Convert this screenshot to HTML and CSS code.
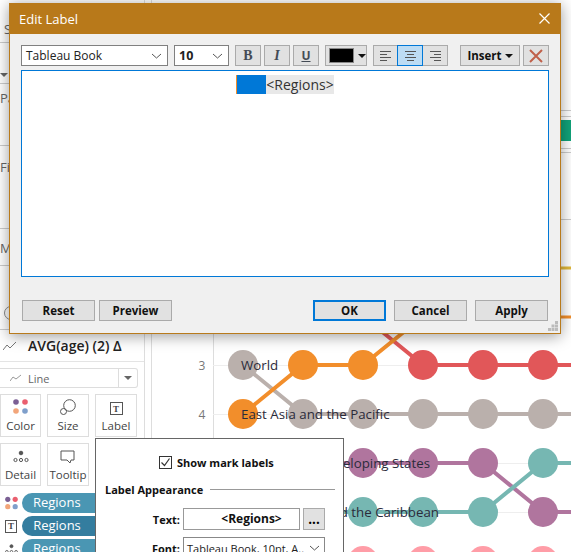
FILE: index.html
```html
<!DOCTYPE html>
<html lang="en">
<head>
    <meta charset="UTF-8">
    <meta name="viewport" content="width=device-width, initial-scale=1.0">
    <title>Edit Label</title>
    <link rel="stylesheet" href="styles.css">
</head>
<body>
    <div class="app">
        <!-- left panel, mostly behind the dialog -->
        <div class="side">
            <div class="side-sec sec-s"><span>S</span></div>
            <div class="side-sec sec-arrow"><span class="tri"></span></div>
            <div class="side-sec sec-pa"><span>Pa</span></div>
            <div class="side-sec sec-fi"><span>Fi</span></div>
            <div class="side-sec sec-m"><span>M</span></div>
            <div class="side-sec sec-circle"><span class="ring"></span></div>
            <div class="marks">
                <div class="marks-title">
                    <svg width="14" height="10" viewBox="0 0 14 10"><path d="M0 9 L4 4 L7 7 L13 1" fill="none" stroke="#777" stroke-width="1"/></svg>
                    <span>AVG(age) (2) Δ</span>
                </div>
                <div class="mark-type">
                    <svg width="12" height="8" viewBox="0 0 12 8"><path d="M0 7 L3 3 L6 5 L11 1" fill="none" stroke="#999" stroke-width="1"/></svg>
                    <span class="mark-type-name">Line</span>
                    <span class="mark-type-btn"><span class="tri"></span></span>
                </div>
                <div class="cards">
                    <div class="card">
                        <svg width="16" height="16" viewBox="0 0 16 16">
                            <circle cx="3" cy="3" r="2.8" fill="#7b5f94"/><circle cx="12" cy="3" r="2.8" fill="#ea5f6f"/>
                            <circle cx="3" cy="12" r="2.8" fill="#f2a57a"/><circle cx="12" cy="12" r="2.8" fill="#7f9fcb"/>
                        </svg>
                        <span>Color</span>
                    </div>
                    <div class="card">
                        <svg width="16" height="16" viewBox="0 0 16 16" fill="none" stroke="#555">
                            <circle cx="9.5" cy="6.5" r="5.8"/><circle cx="3.5" cy="12.5" r="3"/>
                        </svg>
                        <span>Size</span>
                    </div>
                    <div class="card">
                        <span class="t-box">T</span>
                        <span>Label</span>
                    </div>
                    <div class="card">
                        <svg width="16" height="14" viewBox="0 0 16 14" fill="none" stroke="#555">
                            <circle cx="8" cy="3" r="1.8" fill="#555"/>
                            <circle cx="2.5" cy="10" r="1.6"/><circle cx="8" cy="10" r="1.6"/><circle cx="13.5" cy="10" r="1.6"/>
                        </svg>
                        <span>Detail</span>
                    </div>
                    <div class="card">
                        <svg width="16" height="14" viewBox="0 0 16 14"><path d="M1 1 H14 V10 H11 L10 13 L7 10 H1 Z" fill="none" stroke="#555"/></svg>
                        <span>Tooltip</span>
                    </div>
                </div>
                <div class="pill-row">
                    <svg width="14" height="14" viewBox="0 0 14 14">
                        <circle cx="3" cy="3" r="2.8" fill="#7b5f94"/><circle cx="11" cy="3" r="2.8" fill="#ea5f6f"/>
                        <circle cx="3" cy="11" r="2.8" fill="#f2a57a"/><circle cx="11" cy="11" r="2.8" fill="#7f9fcb"/>
                    </svg>
                    <span class="pill">Regions</span>
                </div>
                <div class="pill-row">
                    <span class="t-box">T</span>
                    <span class="pill pill-dark">Regions</span>
                </div>
                <div class="pill-row">
                    <svg width="14" height="12" viewBox="0 0 14 12" fill="none" stroke="#555">
                        <circle cx="7" cy="3" r="1.6" fill="#555"/>
                        <circle cx="2" cy="9" r="1.4"/><circle cx="7" cy="9" r="1.4"/><circle cx="12" cy="9" r="1.4"/>
                    </svg>
                    <span class="pill">Regions</span>
                </div>
            </div>
        </div>

        <!-- bump chart -->
        <svg class="chart" width="426" height="552" viewBox="145 0 426 552">
            <line x1="151.5" y1="0" x2="151.5" y2="552" stroke="#ddd"/>
            <line x1="213.5" y1="300" x2="213.5" y2="552" stroke="#ddd"/>
            <g stroke="#ccc">
                <line x1="555" y1="110.500" x2="571" y2="110.500"/>
                <line x1="555" y1="116.500" x2="571" y2="116.500"/>
                <line x1="555" y1="148.500" x2="571" y2="148.500"/>
                <line x1="555" y1="152.500" x2="571" y2="152.500"/>
                <line x1="555" y1="219.500" x2="571" y2="219.500"/>
            </g>
            <g stroke="#eee">
                <line x1="213" y1="365.5" x2="571" y2="365.5"/>
                <line x1="213" y1="414.5" x2="571" y2="414.5"/>
                <line x1="213" y1="463.5" x2="571" y2="463.5"/>
                <line x1="213" y1="512.5" x2="571" y2="512.5"/>
            </g>
            <text class="axis" x="202" y="370" text-anchor="middle">3</text>
            <text class="axis" x="202" y="419" text-anchor="middle">4</text>

            <path d="M530 317 L571 317" stroke="#f28e2b" stroke-width="3"/>
            <path d="M530 268 L571 268" stroke="#e0b83a" stroke-width="3"/>
            <rect x="555" y="120" width="16" height="21" fill="#10a37a"/>

            <g fill="none" stroke-width="4">
                <path d="M243 561 L571 561" stroke="#ff9da7"/>
                <path d="M243 463 L423 463 L483 463 L543 512 L571 512" stroke="#b0759e"/>
                <path d="M243 512 L483 512 L543 463 L571 463" stroke="#76b7b2"/>
                <path d="M243 365 L303 414 L571 414" stroke="#bab0ac"/>
                <path d="M380 330 L423 365 L571 365" stroke="#e15759"/>
                <path d="M243 414 L303 365 L363 365 L405 331" stroke="#f28e2b"/>
            </g>
            <g fill="#ff9da7">
                <circle cx="243" cy="561" r="15"/><circle cx="303" cy="561" r="15"/><circle cx="363" cy="561" r="15"/>
                <circle cx="423" cy="561" r="15"/><circle cx="483" cy="561" r="15"/><circle cx="543" cy="561" r="15"/>
            </g>
            <g fill="#b0759e">
                <circle cx="303" cy="463" r="15"/><circle cx="363" cy="463" r="15"/><circle cx="423" cy="463" r="15"/>
                <circle cx="483" cy="463" r="15"/><circle cx="543" cy="512" r="15"/>
            </g>
            <g fill="#76b7b2">
                <circle cx="303" cy="512" r="15"/><circle cx="363" cy="512" r="15"/><circle cx="423" cy="512" r="15"/>
                <circle cx="483" cy="512" r="15"/><circle cx="543" cy="463" r="15"/>
            </g>
            <g fill="#bab0ac">
                <circle cx="243" cy="365" r="15"/><circle cx="303" cy="414" r="15"/><circle cx="363" cy="414" r="15"/>
                <circle cx="423" cy="414" r="15"/><circle cx="483" cy="414" r="15"/><circle cx="543" cy="414" r="15"/>
            </g>
            <g fill="#f28e2b">
                <circle cx="243" cy="414" r="15"/><circle cx="303" cy="365" r="15"/><circle cx="363" cy="365" r="15"/>
            </g>
            <g fill="#e15759">
                <circle cx="423" cy="365" r="15"/><circle cx="483" cy="365" r="15"/><circle cx="543" cy="365" r="15"/>
            </g>
            <text class="mark-label" x="241" y="370">World</text>
            <text class="mark-label" x="241" y="419">East Asia and the Pacific</text>
            <text class="mark-label" x="430" y="468" text-anchor="end">Small Island Developing States</text>
            <text class="mark-label" x="439" y="517" text-anchor="end">Latin America and the Caribbean</text>
        </svg>
    </div>

    <!-- label popover -->
    <div class="popover">
        <label class="show-labels">
            <span class="check">
                <svg width="13" height="13" viewBox="0 0 13 13"><path d="M2.5 6.5 L5.5 9.5 L10.5 2.5" fill="none" stroke="#333" stroke-width="1.2"/></svg>
            </span>
            Show mark labels
        </label>
        <div class="legend"><span>Label Appearance</span><i></i></div>
        <div class="form">
            <span class="form-label">Text:</span>
            <div class="text-field">&lt;Regions&gt;</div>
            <button class="more">...</button>
            <span class="form-label">Font:</span>
            <div class="font-field">
                <span>Tableau Book, 10pt, A..</span>
                <svg class="chev" width="11" height="6" viewBox="0 0 11 6"><path d="M1 1 L5.5 5 L10 1" fill="none" stroke="#555"/></svg>
            </div>
        </div>
    </div>

    <!-- edit label dialog -->
    <div class="dialog">
        <div class="titlebar">
            <span>Edit Label</span>
            <svg width="11" height="11" viewBox="0 0 11 11"><path d="M0.5 0.5 L10.5 10.5 M10.5 0.5 L0.5 10.5" stroke="#fff" stroke-width="1.2"/></svg>
        </div>
        <div class="dialog-body">
            <div class="toolbar">
                <div class="select select-font">
                    <span>Tableau Book</span>
                    <svg class="chev" width="11" height="6" viewBox="0 0 11 6"><path d="M1 1 L5.5 5 L10 1" fill="none" stroke="#555"/></svg>
                </div>
                <div class="select select-size">
                    <b>10</b>
                    <svg class="chev" width="11" height="6" viewBox="0 0 11 6"><path d="M1 1 L5.5 5 L10 1" fill="none" stroke="#555"/></svg>
                </div>
                <div class="tool-group">
                    <button class="tool tool-b">B</button>
                    <button class="tool tool-i">I</button>
                    <button class="tool tool-u">U</button>
                </div>
                <button class="color-btn"><span class="swatch"></span><span class="tri tri-black"></span></button>
                <div class="align-group">
                    <button class="align">
                        <svg width="11" height="10" viewBox="0 0 11 10"><path d="M0 .5H11M0 3.500H7M0 6.500H11M0 9.500H7" stroke="#555"/></svg>
                    </button>
                    <button class="align align-on">
                        <svg width="11" height="10" viewBox="0 0 11 10"><path d="M0 .5H11M2 3.500H9M0 6.500H11M2 9.500H9" stroke="#555"/></svg>
                    </button>
                    <button class="align">
                        <svg width="11" height="10" viewBox="0 0 11 10"><path d="M0 .5H11M4 3.500H11M0 6.500H11M4 9.500H11" stroke="#555"/></svg>
                    </button>
                </div>
                <button class="insert">Insert<span class="tri tri-black"></span></button>
                <button class="clear">
                    <svg width="14" height="14" viewBox="0 0 14 14"><path d="M1 1 L13 13 M13 1 L1 13" stroke="#c0604a" stroke-width="2"/></svg>
                </button>
            </div>
            <div class="editor">
                <span class="caret-sel"></span><span class="field">&lt;Regions&gt;</span>
            </div>
            <div class="actions">
                <div class="actions-left">
                    <button class="btn">Reset</button>
                    <button class="btn">Preview</button>
                </div>
                <div class="actions-right">
                    <button class="btn btn-default">OK</button>
                    <button class="btn">Cancel</button>
                    <button class="btn">Apply</button>
                </div>
            </div>
        </div>
        <svg class="grip" width="11" height="11" viewBox="0 0 11 11" fill="#bbb">
            <rect x="7" y="0" width="3" height="3"/><rect x="3.500" y="3.500" width="3" height="3"/><rect x="7" y="3.500" width="3" height="3"/>
            <rect x="0" y="7" width="3" height="3"/><rect x="3.500" y="7" width="3" height="3"/><rect x="7" y="7" width="3" height="3"/>
        </svg>
    </div>
</body>
</html>
```
FILE: styles.css
```css
html, body {
    margin: 0;
    padding: 0;
}

body {
    position: relative;
    width: 571px;
    height: 552px;
    overflow: hidden;
    background-color: #fff;
    font-family: "Open Sans", "Noto Sans", sans-serif;
    font-size: 12px;
    color: #333;
}

button {
    font-family: inherit;
    cursor: pointer;
}

.app {
    display: flex;
    height: 552px;
}

/* left panel */
.side {
    width: 145px;
    flex: none;
    height: 552px;
    overflow: hidden;
    box-sizing: border-box;
    border-right: 1px solid #ddd;
    background-color: #fff;
}

.side-sec {
    box-sizing: border-box;
    border-bottom: 1px solid #ccc;
    padding-left: 0;
    font-size: 13px;
    color: #666;
}

.sec-s { height: 43px; padding-top: 20px; padding-left: 4px; }
.sec-arrow { height: 41px; padding-top: 20px; }
.sec-pa { height: 62px; padding-top: 5px; }
.sec-fi { height: 83px; padding-top: 12px; }
.sec-m { height: 37px; padding-top: 10px; }
.sec-circle { height: 64px; padding-top: 40px; }

.ring {
    display: block;
    width: 12px;
    height: 12px;
    margin-left: 4px;
    border: 1px solid #888;
    border-radius: 50%;
}

.tri {
    display: inline-block;
    width: 0;
    height: 0;
    border-left: 4px solid transparent;
    border-right: 4px solid transparent;
    border-top: 4px solid #666;
}

.tri-black {
    border-top-color: #111;
}

.marks-title {
    display: flex;
    align-items: center;
    gap: 11px;
    box-sizing: border-box;
    height: 32px;
    padding-left: 3px;
    border-bottom: 1px solid #e4e4e4;
    font-size: 14px;
    font-weight: 600;
    color: #222;
}

.mark-type {
    display: flex;
    align-items: center;
    box-sizing: border-box;
    width: 138px;
    height: 20px;
    margin-top: 6px;
    padding-left: 10px;
    border: 1px solid #ddd;
    border-left: none;
    border-radius: 0 3px 3px 0;
    font-size: 11px;
    color: #666;
}

.mark-type-name {
    margin-left: 6px;
}

.mark-type-btn {
    display: flex;
    align-items: center;
    justify-content: center;
    width: 18px;
    height: 18px;
    margin-left: auto;
    border-left: 1px solid #ddd;
}

.cards {
    display: grid;
    grid-template-columns: 41px 42px 42px;
    column-gap: 6px;
    row-gap: 6px;
    width: 138px;
    margin-top: 6px;
    margin-bottom: 7px;
}

.card {
    display: flex;
    flex-direction: column;
    align-items: center;
    justify-content: flex-end;
    gap: 3px;
    box-sizing: border-box;
    height: 43px;
    padding-bottom: 3px;
    border: 1px solid #ddd;
    font-size: 11.500px;
    color: #444;
}

.t-box {
    display: flex;
    align-items: center;
    justify-content: center;
    box-sizing: border-box;
    width: 13px;
    height: 13px;
    border: 1px solid #555;
    font-family: "Liberation Serif", serif;
    font-size: 9px;
    font-weight: bold;
    color: #444;
}

.pill-row {
    display: flex;
    align-items: center;
    gap: 4px;
    height: 20px;
    margin-bottom: 3px;
    padding-left: 5px;
}

.pill-row .t-box {
    margin-right: 1px;
}

.pill {
    display: block;
    width: 120px;
    height: 20px;
    padding-left: 11px;
    line-height: 19px;
    border-radius: 10px;
    background-color: #4a96b3;
    font-size: 13px;
    color: #fff;
}

.pill-dark {
    background-color: #347d9f;
}

/* chart */
.chart {
    flex: none;
    display: block;
}

.axis {
    font-family: "Open Sans", sans-serif;
    font-size: 12px;
    fill: #777;
}

.mark-label {
    font-family: "Open Sans", sans-serif;
    font-size: 13.300px;
    fill: #2b2b3a;
}

/* popover over the marks card */
.popover {
    position: absolute;
    left: 95px;
    top: 438px;
    box-sizing: border-box;
    width: 249px;
    height: 130px;
    padding: 0 8px 0 9px;
    border: 1px solid #666;
    background-color: #fff;
    color: #111;
}

.show-labels {
    display: flex;
    align-items: center;
    justify-content: flex-start;
    gap: 5px;
    height: 14px;
    margin-top: 16px;
    padding-left: 54px;
    font-weight: 700;
    font-size: 11px;
}

.check {
    display: block;
    box-sizing: border-box;
    width: 13px;
    height: 13px;
    border: 1px solid #333;
}

.check svg {
    display: block;
    margin: -1px;
}

.legend {
    display: flex;
    align-items: center;
    gap: 7px;
    margin-top: 13px;
    font-weight: 700;
    font-size: 11px;
}

.legend i {
    flex: 1;
    height: 1px;
    background-color: #999;
}

.form {
    display: grid;
    grid-template-columns: 75px 117px 22px;
    column-gap: 3px;
    row-gap: 7px;
    margin-top: 11px;
}

.form-label {
    align-self: center;
    text-align: right;
    font-weight: 700;
    font-size: 11px;
}

.text-field {
    box-sizing: border-box;
    height: 22px;
    padding-left: 20px;
    line-height: 20px;
    border: 1px solid #999;
    text-align: center;
    font-weight: 700;
    font-size: 12px;
}

.more {
    height: 22px;
    padding: 0;
    border: 1px solid #aaa;
    background-color: #e1e1e1;
    font-weight: 700;
    line-height: 14px;
}

.font-field {
    grid-column: 2 / 4;
    display: flex;
    align-items: center;
    justify-content: space-between;
    box-sizing: border-box;
    height: 22px;
    padding: 0 4px 0 3px;
    border: 1px solid #888;
    font-size: 11px;
    color: #222;
}

/* dialog */
.dialog {
    position: absolute;
    left: 9px;
    top: 3px;
    box-sizing: border-box;
    width: 552px;
    height: 331px;
    border: 1px solid #b87a1c;
    border-top: none;
    background-color: #f0f0f0;
    box-shadow: 0 2px 14px rgba(0, 0, 0, 0.4);
}

.titlebar {
    display: flex;
    align-items: center;
    justify-content: space-between;
    height: 31px;
    padding: 0 10px 0 9px;
    background-color: #b8791a;
    font-size: 13px;
    color: #fff;
}

.dialog-body {
    display: flex;
    flex-direction: column;
    padding: 11px 11px 0;
}

.toolbar {
    display: flex;
    align-items: stretch;
    height: 21px;
}

.toolbar > * {
    flex: none;
}

.select {
    display: flex;
    align-items: center;
    justify-content: space-between;
    box-sizing: border-box;
    padding: 0 5px 0 4px;
    border: 1px solid #808080;
    background-color: #fff;
    color: #222;
}

.select-font {
    width: 147px;
    font-size: 12px;
}

.select-size {
    width: 55px;
    margin-left: 6px;
    font-size: 12.500px;
}

.tool-group {
    display: flex;
    gap: 3px;
    margin-left: 6px;
}

.tool {
    box-sizing: border-box;
    width: 26px;
    padding: 0;
    border: 1px solid #aaa;
    background-color: #e1e1e1;
    font-family: "Liberation Serif", serif;
    font-size: 14px;
    font-weight: 700;
    color: #444b55;
}

.tool-i {
    font-style: italic;
}

.tool-u {
    font-family: "Open Sans", sans-serif;
    font-size: 12px;
    text-decoration: underline;
}

.color-btn {
    display: flex;
    align-items: center;
    gap: 4px;
    box-sizing: border-box;
    width: 42px;
    margin-left: 6px;
    padding: 0 0 0 3px;
    border: 1px solid #aaa;
    background-color: #e1e1e1;
}

.swatch {
    display: block;
    box-sizing: border-box;
    width: 26px;
    height: 15px;
    border: 1px solid #888;
    background-color: #000;
}

.align-group {
    display: flex;
    margin-left: 6px;
}

.align {
    display: flex;
    align-items: center;
    justify-content: center;
    box-sizing: border-box;
    width: 25px;
    padding: 0;
    border: 1px solid #aaa;
    background-color: #e1e1e1;
}

.align + .align {
    margin-left: -1px;
    width: 26px;
}

.align-on {
    position: relative;
    border-color: #0078d7;
    background-color: #bcdcf4;
}

.insert {
    display: flex;
    align-items: center;
    justify-content: center;
    gap: 3px;
    box-sizing: border-box;
    width: 60px;
    margin-left: 12px;
    padding: 0;
    border: 1px solid #aaa;
    background-color: #e1e1e1;
    font-size: 11.500px;
    font-weight: 700;
    color: #111;
}

.clear {
    display: flex;
    align-items: center;
    justify-content: center;
    box-sizing: border-box;
    width: 26px;
    margin-left: 3px;
    padding: 0;
    border: 1px solid #aaa;
    background-color: #e1e1e1;
}

.editor {
    display: flex;
    justify-content: center;
    align-items: flex-start;
    box-sizing: border-box;
    height: 207px;
    margin-top: 4px;
    padding-top: 4px;
    border: 1px solid #0078d7;
    background-color: #fff;
    font-size: 14px;
    color: #333;
}

.caret-sel {
    display: block;
    box-sizing: border-box;
    width: 30px;
    height: 19px;
    border-left: 1px solid #f28e2b;
    background-color: #0078d7;
}

.field {
    height: 19px;
    line-height: 19px;
    background-color: #e8e8e8;
}

.actions {
    display: flex;
    justify-content: space-between;
    margin-top: 23px;
    padding-left: 1px;
    padding-right: 1px;
}

.actions-left {
    display: flex;
    gap: 4px;
}

.actions-right {
    display: flex;
    gap: 8px;
}

.btn {
    box-sizing: border-box;
    width: 73px;
    height: 21px;
    padding: 0;
    border: 1px solid #aaa;
    background-color: #e1e1e1;
    font-size: 11.500px;
    font-weight: 700;
    color: #111;
}

.btn-default {
    border: 2px solid #0078d7;
}

.grip {
    position: absolute;
    right: 1px;
    bottom: 1px;
}
```
